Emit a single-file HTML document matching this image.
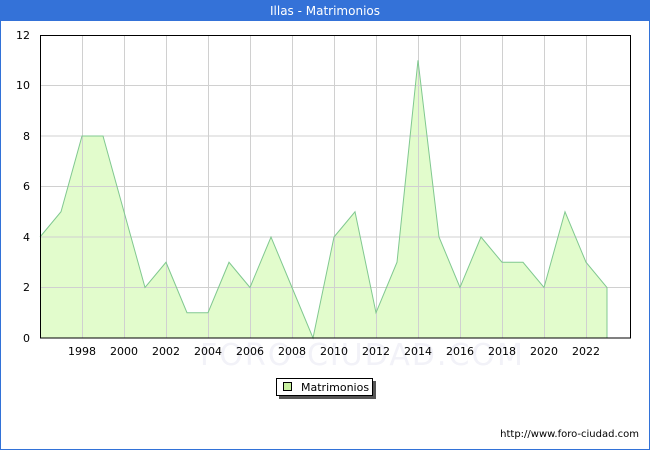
<!DOCTYPE html><html><head><style>body{margin:0;width:650px;height:450px;overflow:hidden;font-family:"DejaVu Sans","Liberation Sans",sans-serif;}
.frame{position:absolute;left:0;top:0;width:648px;height:448px;border:1px solid #3272d8;background:#fff}
.title{position:absolute;left:0;top:0;width:650px;height:21px;background:#3472d8;color:#fff;font-size:12px;text-align:center;line-height:22px}
</style></head><body><div class="frame"></div><div class="title">Illas - Matrimonios</div>
<svg width="650" height="450" style="position:absolute;left:0;top:0" font-family="DejaVu Sans, Liberation Sans, sans-serif" font-size="11">
<text x="200" y="365" font-size="30" fill="#f2f2f8" letter-spacing="2">FORO-CIUDAD.COM</text>
<polygon fill="#e2fccc" stroke="none" points="40,338 40,237 61,211.75 82,136 103,136 124,211.75 145,287.5 166,262.25 187,312.75 208,312.75 229,262.25 250,287.5 271,237 292,287.5 313,338 334,237 355,211.75 376,312.75 397,262.25 418,60.25 439,237 460,287.5 481,237 502,262.25 523,262.25 544,287.5 565,211.75 586,262.25 607,287.5 607,338"/>
<g stroke="#d0d0d0" stroke-width="1">
<line x1="40" x2="630" y1="287.5" y2="287.5"/><line x1="40" x2="630" y1="237" y2="237"/><line x1="40" x2="630" y1="186.5" y2="186.5"/><line x1="40" x2="630" y1="136" y2="136"/><line x1="40" x2="630" y1="85.5" y2="85.5"/>
<line x1="82.5" x2="82.5" y1="35" y2="338"/><line x1="124.5" x2="124.5" y1="35" y2="338"/><line x1="166.5" x2="166.5" y1="35" y2="338"/><line x1="208.5" x2="208.5" y1="35" y2="338"/><line x1="250.5" x2="250.5" y1="35" y2="338"/><line x1="292.5" x2="292.5" y1="35" y2="338"/><line x1="334.5" x2="334.5" y1="35" y2="338"/><line x1="376.5" x2="376.5" y1="35" y2="338"/><line x1="418.5" x2="418.5" y1="35" y2="338"/><line x1="460.5" x2="460.5" y1="35" y2="338"/><line x1="502.5" x2="502.5" y1="35" y2="338"/><line x1="544.5" x2="544.5" y1="35" y2="338"/><line x1="586.5" x2="586.5" y1="35" y2="338"/>
</g>
<polyline fill="none" stroke="#80c890" stroke-width="1" points="40,237 61,211.75 82,136 103,136 124,211.75 145,287.5 166,262.25 187,312.75 208,312.75 229,262.25 250,287.5 271,237 292,287.5 313,338 334,237 355,211.75 376,312.75 397,262.25 418,60.25 439,237 460,287.5 481,237 502,262.25 523,262.25 544,287.5 565,211.75 586,262.25 607,287.5 607,338"/>
<rect x="40.5" y="35.5" width="590" height="302.5" fill="none" stroke="#000" stroke-width="1"/>
<g text-anchor="end" fill="#000"><text x="30" y="342">0</text><text x="30" y="291">2</text><text x="30" y="241">4</text><text x="30" y="190">6</text><text x="30" y="140">8</text><text x="30" y="89">10</text><text x="30" y="39">12</text></g>
<g text-anchor="middle" fill="#000"><text x="82" y="355">1998</text><text x="124" y="355">2000</text><text x="166" y="355">2002</text><text x="208" y="355">2004</text><text x="250" y="355">2006</text><text x="292" y="355">2008</text><text x="334" y="355">2010</text><text x="376" y="355">2012</text><text x="418" y="355">2014</text><text x="460" y="355">2016</text><text x="502" y="355">2018</text><text x="544" y="355">2020</text><text x="586" y="355">2022</text></g>
<rect x="279" y="381" width="97" height="18" fill="#555"/>
<rect x="276.5" y="378.5" width="96" height="17" fill="#fff" stroke="#000"/>
<rect x="283.5" y="382.5" width="8" height="8" fill="#c8f0a0" stroke="#000"/>
<text x="301" y="391" font-size="11">Matrimonios</text>
<text x="639" y="437" font-size="10" text-anchor="end">http://www.foro-ciudad.com</text>
</svg></body></html>
